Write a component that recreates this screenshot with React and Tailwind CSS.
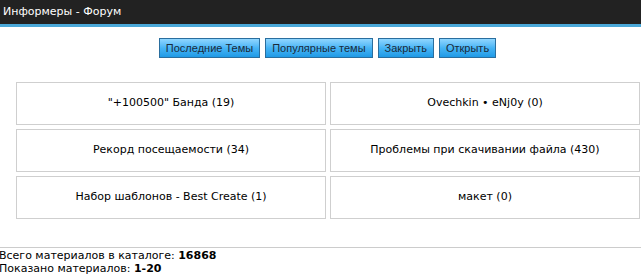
const buttons = ["Последние Темы", "Популярные темы", "Закрыть", "Открыть"];

const forums = [
    {title: "\"+100500\" Банда", count: 19},
    {title: "Ovechkin • eNj0y", count: 0},
    {title: "Рекорд посещаемости", count: 34},
    {title: "Проблемы при скачивании файла", count: 430},
    {title: "Набор шаблонов - Best Create", count: 1},
    {title: "макет", count: 0},
];

const App = () => {
    return (
        <div className="w-[641px] h-[274px] overflow-hidden bg-white font-['DejaVu_Sans',sans-serif]">
            <div className="h-[24px] bg-[#222222] flex items-center pl-[3px] text-white text-[11px]">
                Информеры - Форум
            </div>
            <div className="h-[3px] bg-[#4aa8d8]" />

            <div className="flex justify-center gap-[5px] mt-[11px] pl-[14px]">
                {buttons.map((b) => (
                    <button
                        key={b}
                        className="h-[20px] px-[6px] border border-[#2a6e9e] bg-gradient-to-b from-[#8fd6ff] via-[#45b4f5] to-[#1e9ae6] text-[#1a2a3a] text-[11px] font-['Liberation_Sans',sans-serif] leading-none"
                    >
                        {b}
                    </button>
                ))}
            </div>

            <div className="grid grid-cols-[310px_310px] gap-x-[4px] gap-y-[4px] ml-[16px] mt-[24px]">
                {forums.map((f) => (
                    <div
                        key={f.title}
                        className="h-[43px] border border-[#cfcfcf] flex items-center justify-center text-[11px] text-black"
                    >
                        {f.title} ({f.count})
                    </div>
                ))}
            </div>

            <div className="mt-[28px] border-t border-[#cccccc] pt-[1px] -ml-[1px] text-[11px] leading-[13px] text-black">
                <div>
                    Всего материалов в каталоге: <b>16868</b>
                </div>
                <div>
                    Показано материалов: <b>1-20</b>
                </div>
            </div>
        </div>
    );
};

export default App;
